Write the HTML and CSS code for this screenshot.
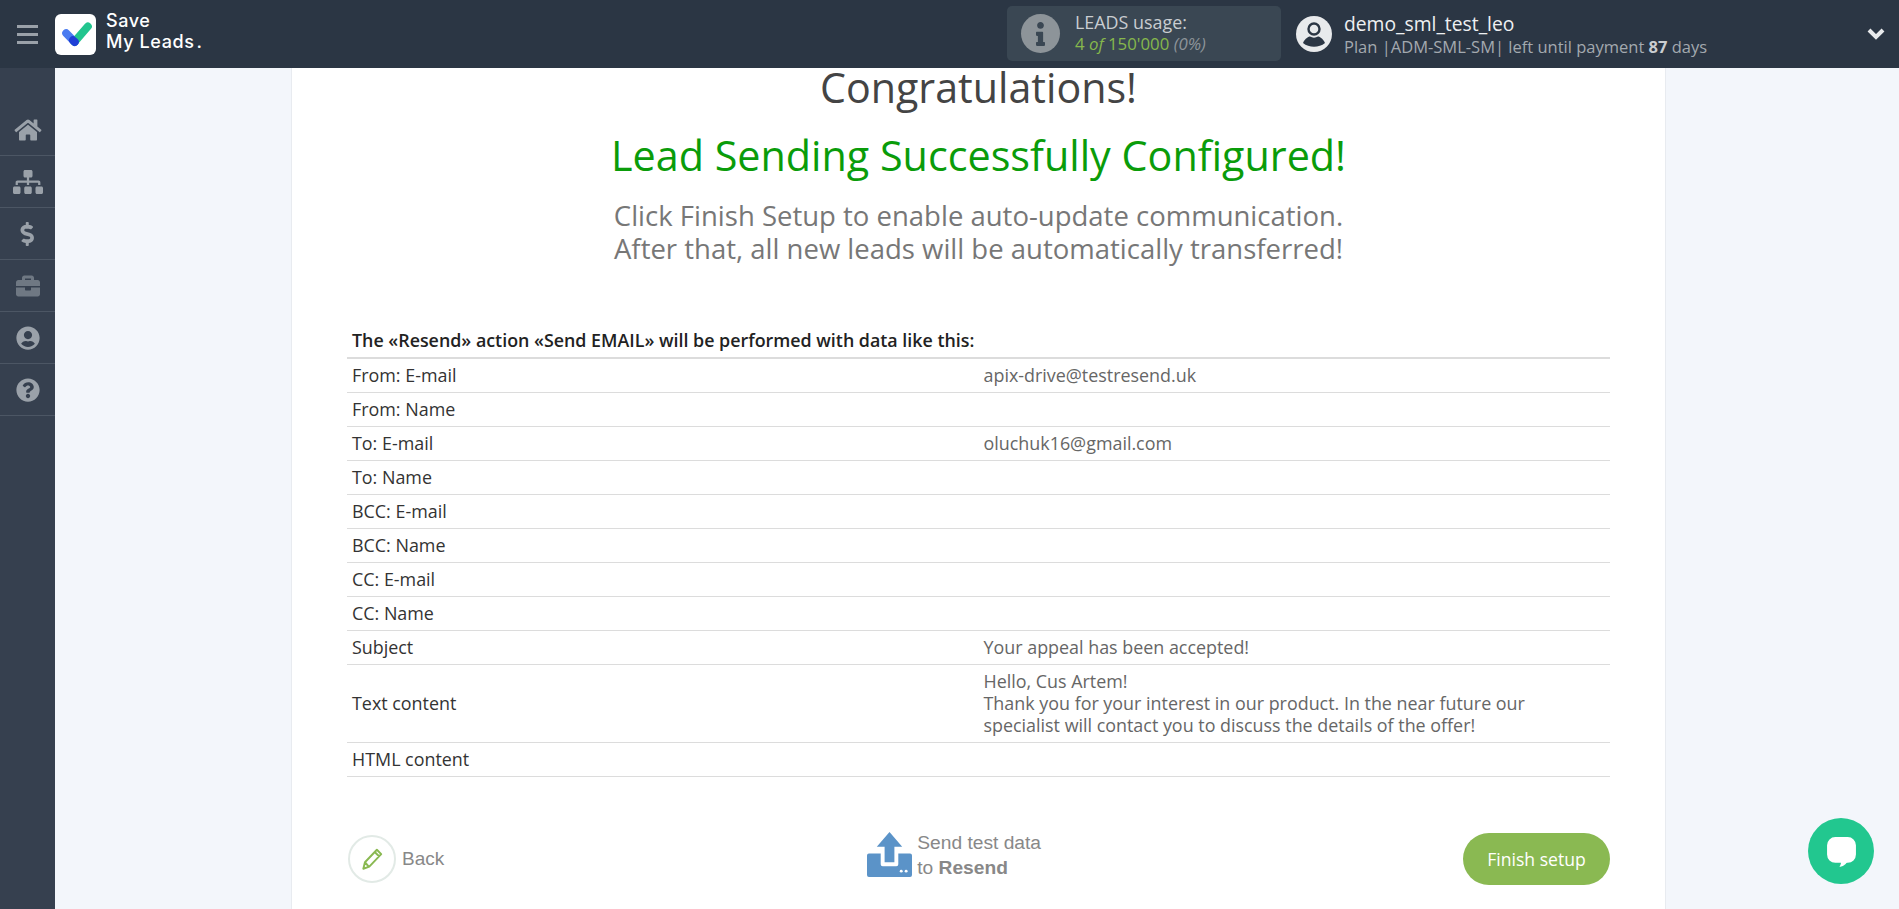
FILE: index.html
```html
<!DOCTYPE html>
<html lang="en">
<head>
<meta charset="utf-8">
<title>Save My Leads</title>
<link rel="stylesheet" href="styles.css">
</head>
<body>
<header class="topbar">
  <div class="burger"><span></span><span></span><span></span></div>
  <div class="logo-box">
    <svg class="logo-mark" viewBox="0 0 32 32"><path d="M6.200 15.200 L14.500 23.800" stroke="#4a7bf0" stroke-width="8" stroke-linecap="round"/><path d="M14.500 23.800 L27.800 8.500" stroke="#22c58e" stroke-width="8" stroke-linecap="round"/><path d="M13 22.300 L14.800 24" stroke="#1f3fd6" stroke-width="8" stroke-linecap="round"/></svg>
  </div>
  <div class="logo-text">Save<br>My Leads<span class="logo-dot">.</span></div>
  <div class="usage">
    <div class="usage-icon"><svg viewBox="0 0 192 512" class="info-glyph"><path d="M20 424h20V296H20c-11 0-20-9-20-20v-48c0-11 9-20 20-20h112c11 0 20 9 20 20v196h20c11 0 20 9 20 20v48c0 11-9 20-20 20H20c-11 0-20-9-20-20v-48c0-11 9-20 20-20zM96 0c40 0 72 32 72 72s-32 72-72 72-72-32-72-72S56 0 96 0z"/></svg></div>
    <div class="usage-text">
      <div class="usage-title">LEADS usage:</div>
      <div class="usage-value"><span class="green">4 <i>of</i> 150'000</span> <i>(0%)</i></div>
    </div>
  </div>
  <div class="user">
    <svg class="avatar" viewBox="0 0 40 40"><circle cx="20" cy="20" r="18" fill="#e8eaec"/><circle cx="20" cy="15" r="5.5" fill="none" stroke="#2b3644" stroke-width="2.4"/><path d="M9 29c2-5 6-6.5 7-6.5 2.500 1.500 5.500 1.500 8 0 1 0 5 1.500 7 6.500-6 5-16 5-22 0z" fill="#2b3644"/></svg>
    <div class="user-text">
      <div class="user-name">demo_sml_test_leo</div>
      <div class="user-plan">Plan |ADM-SML-SM| left until payment <b>87</b> days</div>
    </div>
  </div>
  <svg class="chevron" viewBox="0 0 20 14"><path d="M3 3l7 7 7-7" fill="none" stroke="#e8eaec" stroke-width="4"/></svg>
</header>
<div class="layout">
  <nav class="sidebar">
    <a class="nav-item"><svg class="nav-icon" viewBox="0 0 576 512"><path d="M280.37 148.26L96 300.11V464a16 16 0 0 0 16 16l112.06-.29a16 16 0 0 0 15.92-16V368a16 16 0 0 1 16-16h64a16 16 0 0 1 16 16v95.64a16 16 0 0 0 16 16.05L464 480a16 16 0 0 0 16-16V300L295.67 148.26a12.19 12.19 0 0 0-15.3 0zM571.6 251.47L488 182.56V44.05a12 12 0 0 0-12-12h-56a12 12 0 0 0-12 12v72.61L318.47 43a48 48 0 0 0-61 0L4.34 251.47a12 12 0 0 0-1.6 16.9l25.5 31A12 12 0 0 0 45.15 301l235.22-193.74a12.19 12.19 0 0 1 15.3 0L530.9 301a12 12 0 0 0 16.9-1.6l25.5-31a12 12 0 0 0-1.7-16.93z"/></svg></a>
    <a class="nav-item"><svg class="nav-icon" viewBox="0 0 640 512"><path d="M128 352H32c-17.700 0-32 14.300-32 32v96c0 17.700 14.300 32 32 32h96c17.700 0 32-14.300 32-32v-96c0-17.700-14.300-32-32-32zm-24-80h192v48h48v-48h192v48h48v-57.600c0-21.200-17.200-38.400-38.400-38.400H344v-64h40c17.700 0 32-14.300 32-32V32c0-17.700-14.300-32-32-32H256c-17.700 0-32 14.300-32 32v96c0 17.700 14.300 32 32 32h40v64H94.400C73.200 224 56 241.200 56 262.400V320h48v-48zm264 80h-96c-17.700 0-32 14.300-32 32v96c0 17.700 14.300 32 32 32h96c17.700 0 32-14.300 32-32v-96c0-17.700-14.300-32-32-32zm240 0h-96c-17.700 0-32 14.300-32 32v96c0 17.700 14.300 32 32 32h96c17.700 0 32-14.300 32-32v-96c0-17.700-14.300-32-32-32z"/></svg></a>
    <a class="nav-item"><svg class="nav-icon" viewBox="0 0 320 512"><path d="M209.200 233.400l-108-31.600C88.700 198.200 80 186.500 80 173.500c0-16.300 13.200-29.500 29.500-29.500h66.300c12.200 0 24.200 3.700 34.200 10.500 6.100 4.100 14.300 3.100 19.500-2l34.800-34c7.100-6.900 6.100-18.400-1.800-24.500C238 74.800 207.400 64.100 176 64V16c0-8.800-7.200-16-16-16h-32c-8.800 0-16 7.200-16 16v48h-2.500C45.800 64-5.400 118.700.5 183.600c4.200 46.100 39.400 83.600 83.800 96.600l102.500 30c12.500 3.700 21.200 15.300 21.200 28.300 0 16.300-13.200 29.500-29.500 29.500h-66.300C100 368 88 364.300 78 357.500c-6.100-4.100-14.300-3.100-19.500 2l-34.800 34c-7.100 6.900-6.100 18.400 1.800 24.500 24.500 19.200 55.100 29.900 86.500 30v48c0 8.800 7.200 16 16 16h32c8.800 0 16-7.200 16-16v-48.200c46.600-.9 90.300-28.600 105.700-72.700 21.500-61.600-14.600-124.800-72.500-141.700z"/></svg></a>
    <a class="nav-item"><svg class="nav-icon dim" viewBox="0 0 512 512"><path d="M320 336c0 8.840-7.160 16-16 16h-96c-8.840 0-16-7.160-16-16v-48H0v144c0 25.600 22.400 48 48 48h416c25.600 0 48-22.400 48-48V288H320v48zm144-208h-80V80c0-25.600-22.400-48-48-48H176c-25.600 0-48 22.400-48 48v48H48c-25.600 0-48 22.400-48 48v80h512v-80c0-25.600-22.400-48-48-48zm-144 0H192V96h128v32z"/></svg></a>
    <a class="nav-item"><svg class="nav-icon" viewBox="0 0 496 512"><path d="M248 8C111 8 0 119 0 256s111 248 248 248 248-111 248-248S385 8 248 8zm0 96c48.600 0 88 39.400 88 88s-39.400 88-88 88-88-39.400-88-88 39.400-88 88-88zm0 344c-58.700 0-111.300-26.600-146.500-68.200 18.800-35.400 55.600-59.800 98.500-59.800 2.400 0 4.800.4 7.100 1.100 13 4.200 26.600 6.900 40.900 6.900 14.300 0 28-2.700 40.900-6.900 2.300-.7 4.700-1.100 7.100-1.100 42.900 0 79.700 24.400 98.500 59.800C359.300 421.400 306.700 448 248 448z"/></svg></a>
    <a class="nav-item"><svg class="nav-icon" viewBox="0 0 512 512"><path d="M504 256c0 136.997-111.043 248-248 248S8 392.997 8 256C8 119.083 119.043 8 256 8s248 111.083 248 248zM262.655 90c-54.497 0-89.255 22.957-116.549 63.758-3.536 5.286-2.353 12.415 2.715 16.258l34.699 26.310c5.205 3.947 12.621 3.008 16.665-2.122 17.864-22.658 30.113-35.797 57.303-35.797 20.429 0 45.698 13.148 45.698 32.958 0 14.976-12.363 22.667-32.534 33.976C247.128 238.528 216 254.941 216 296v4c0 6.627 5.373 12 12 12h56c6.627 0 12-5.373 12-12v-1.333c0-28.462 83.186-29.647 83.186-106.667 0-58.002-60.165-102-116.531-102zM256 338c-25.365 0-46 20.635-46 46 0 25.364 20.635 46 46 46s46-20.636 46-46c0-25.365-20.635-46-46-46z"/></svg></a>
  </nav>
  <main class="content">
    <section class="panel">
      <h1 class="congrats">Congratulations!</h1>
      <h2 class="success">Lead Sending Successfully Configured!</h2>
      <p class="hint">Click Finish Setup to enable auto-update communication.<br>After that, all new leads will be automatically transferred!</p>
      <table class="data">
        <thead><tr><th colspan="2">The «Resend» action «Send EMAIL» will be performed with data like this:</th></tr></thead>
        <tbody>
          <tr><td>From: E-mail</td><td>apix-drive@testresend.uk</td></tr>
          <tr><td>From: Name</td><td></td></tr>
          <tr><td>To: E-mail</td><td>oluchuk16@gmail.com</td></tr>
          <tr><td>To: Name</td><td></td></tr>
          <tr><td>BCC: E-mail</td><td></td></tr>
          <tr><td>BCC: Name</td><td></td></tr>
          <tr><td>CC: E-mail</td><td></td></tr>
          <tr><td>CC: Name</td><td></td></tr>
          <tr><td>Subject</td><td>Your appeal has been accepted!</td></tr>
          <tr><td>Text content</td><td>Hello, Cus Artem!<br>Thank you for your interest in our product. In the near future our specialist will contact you to discuss the details of the offer!</td></tr>
          <tr><td>HTML content</td><td></td></tr>
        </tbody>
      </table>
      <div class="actions">
        <a class="back">
          <span class="back-circle"><svg viewBox="0 0 24 24"><path d="M4 21l1.500-6L16.500 3.500 20.500 7.500 9.500 19z M14.500 5.500l4 4 M5.500 15l3.500 4" fill="none" stroke="#8ab952" stroke-width="1.800" stroke-linejoin="round"/></svg></span>
          <span>Back</span>
        </a>
        <a class="send">
          <svg class="send-icon" viewBox="0 0 46 46"><path d="M23 0 L36 15 H28 V31 H18 V15 H10 Z" fill="#5b93c8"/><path d="M2 22 H14 V33 a2 2 0 0 0 2 2 H30 a2 2 0 0 0 2-2 V22 H44 a2 2 0 0 1 2 2 V44 a2 2 0 0 1-2 2 H2 a2 2 0 0 1-2-2 V24 a2 2 0 0 1 2-2z" fill="#5b93c8"/><circle cx="35" cy="40" r="1.500" fill="#fff"/><circle cx="40" cy="40" r="1.500" fill="#fff"/></svg>
          <span class="send-text">Send test data<br>to <b>Resend</b></span>
        </a>
        <a class="finish">Finish setup</a>
      </div>
    </section>
  </main>
</div>
<div class="chat"><svg viewBox="0 0 32 32"><path d="M10 2h12a8 8 0 0 1 8 8v9a8 8 0 0 1-8 8c-1 0-1.500 .5-2 1-1.500 1.500-3.500 2.500-6 3 1-1.500 1.500-3 1.500-4H10a8 8 0 0 1-8-8v-9a8 8 0 0 1 8-8z" fill="#fff"/></svg></div>
</body>
</html>
```
FILE: styles.css
```css
* { box-sizing: border-box; }
html, body { margin: 0; height: 100%; overflow: hidden; }
body { font-family: "Open Sans", sans-serif; background: #f3f6fb; color: #333; }
.topbar { height: 68px; background: #2b3644; display: flex; align-items: center; color: #fff; position: relative; z-index: 1; }
.burger { width: 55px; display: flex; flex-direction: column; align-items: center; gap: 5px; }
.burger span { width: 21px; height: 3px; background: #9aa1a9; }
.logo-box { width: 41px; height: 41px; background: #fff; border-radius: 6px; display: flex; align-items: center; justify-content: center; }
.logo-mark { width: 32px; height: 32px; }
.logo-text { margin-left: 10px; padding-bottom: 6px; width: 901px; font-family: Inter, sans-serif; font-weight: 500; font-size: 18px; line-height: 21px; letter-spacing: .6px; }
.logo-dot { letter-spacing: 0; margin-left: 2px; }
.usage { width: 274px; height: 55px; background: #3a4753; border-radius: 5px; display: flex; align-items: center; padding-left: 14px; margin-bottom: 1px; }
.usage-icon { width: 39px; height: 39px; border-radius: 50%; background: #8d9499; display: flex; align-items: center; justify-content: center; flex: none; }
.info-glyph { height: 24px; fill: #3a4753; }
.usage-text { margin-left: 15px; padding-bottom: 2px; line-height: 22px; color: #c9cdd1; }
.usage-title { font-size: 17.900px; }
.usage-value { font-size: 16.800px; color: #8d9499; }
.green { color: #86b84c; }
.user { margin-left: 13px; display: flex; align-items: center; flex: 1; }
.avatar { width: 40px; height: 40px; }
.user-text { margin-left: 10px; }
.user-name { font-size: 19.300px; line-height: 24px; padding-top: 1px; color: #eef0f2; }
.user-plan { font-size: 16.500px; line-height: 22px; color: #a3a9af; }
.user-plan b { color: #c9cdd1; }
.chevron { width: 20px; height: 14px; margin-right: 13px; }
.layout { display: flex; height: 841px; }
.sidebar { width: 55px; background: #36404f; padding-top: 36px; flex: none; }
.nav-item { display: flex; align-items: center; justify-content: center; height: 52px; border-bottom: 1px solid #4c5664; }
.nav-icon { height: 24px; width: 30px; fill: #9aa1a9; }
.nav-icon.dim { fill: #6f7883; }
.content { flex: 1; padding-left: 236px; }
.panel { width: 1375px; background: #fff; border: 1px solid #e8ebf0; border-width: 0 1px; padding: 0 55px; height: 841px; text-align: center; }
.congrats { margin: 0; font-weight: 400; font-size: 41.200px; line-height: 38px; color: #444; }
.success { margin: 21px 0 0; font-weight: 400; font-size: 41.300px; line-height: 56px; color: #0a9c0a; }
.hint { margin: 16px 0 0; font-size: 27.500px; line-height: 33px; color: #777; }
.data { width: 100%; margin-top: 57px; border-collapse: collapse; text-align: left; table-layout: fixed; }
.data th { font-weight: 600; font-size: 17.850px; color: #222; padding: 0 5px; height: 36px; border-bottom: 2px solid #dcdcdc; }
.data td { padding: 5px 5px; line-height: 22.400px; height: 34px; border-bottom: 1px solid #dcdcdc; color: #333; width: 50%; font-size: 17.900px; vertical-align: middle; }
.data td + td { color: #666; padding-right: 60px; }
.actions { display: flex; align-items: center; margin-top: 53px; padding: 0 0 0 1px; }
.back { display: flex; align-items: center; gap: 6px; font-family: "Liberation Sans", sans-serif; font-size: 19px; color: #888; flex: 1; }
.back-circle { width: 48px; height: 48px; border: 2px solid #e2eae6; border-radius: 50%; display: flex; align-items: center; justify-content: center; }
.back-circle svg { width: 26px; height: 26px; }
.send { display: flex; align-items: center; gap: 5px; margin-bottom: 8px; font-family: "Liberation Sans", sans-serif; font-size: 19.200px; line-height: 25px; color: #888; text-align: left; flex: none; }
.send-icon { width: 45px; height: 45px; }
.finish { flex: none; margin-left: 422px; width: 147px; height: 52px; border-radius: 26px; background: #8ab952; color: #fff; font-size: 17.600px; line-height: 52px; text-align: center; }
.chat { position: fixed; left: 1808px; top: 818px; width: 66px; height: 66px; border-radius: 50%; background: #22c78f; display: flex; align-items: center; justify-content: center; }
.chat svg { width: 33px; height: 33px; }
```
